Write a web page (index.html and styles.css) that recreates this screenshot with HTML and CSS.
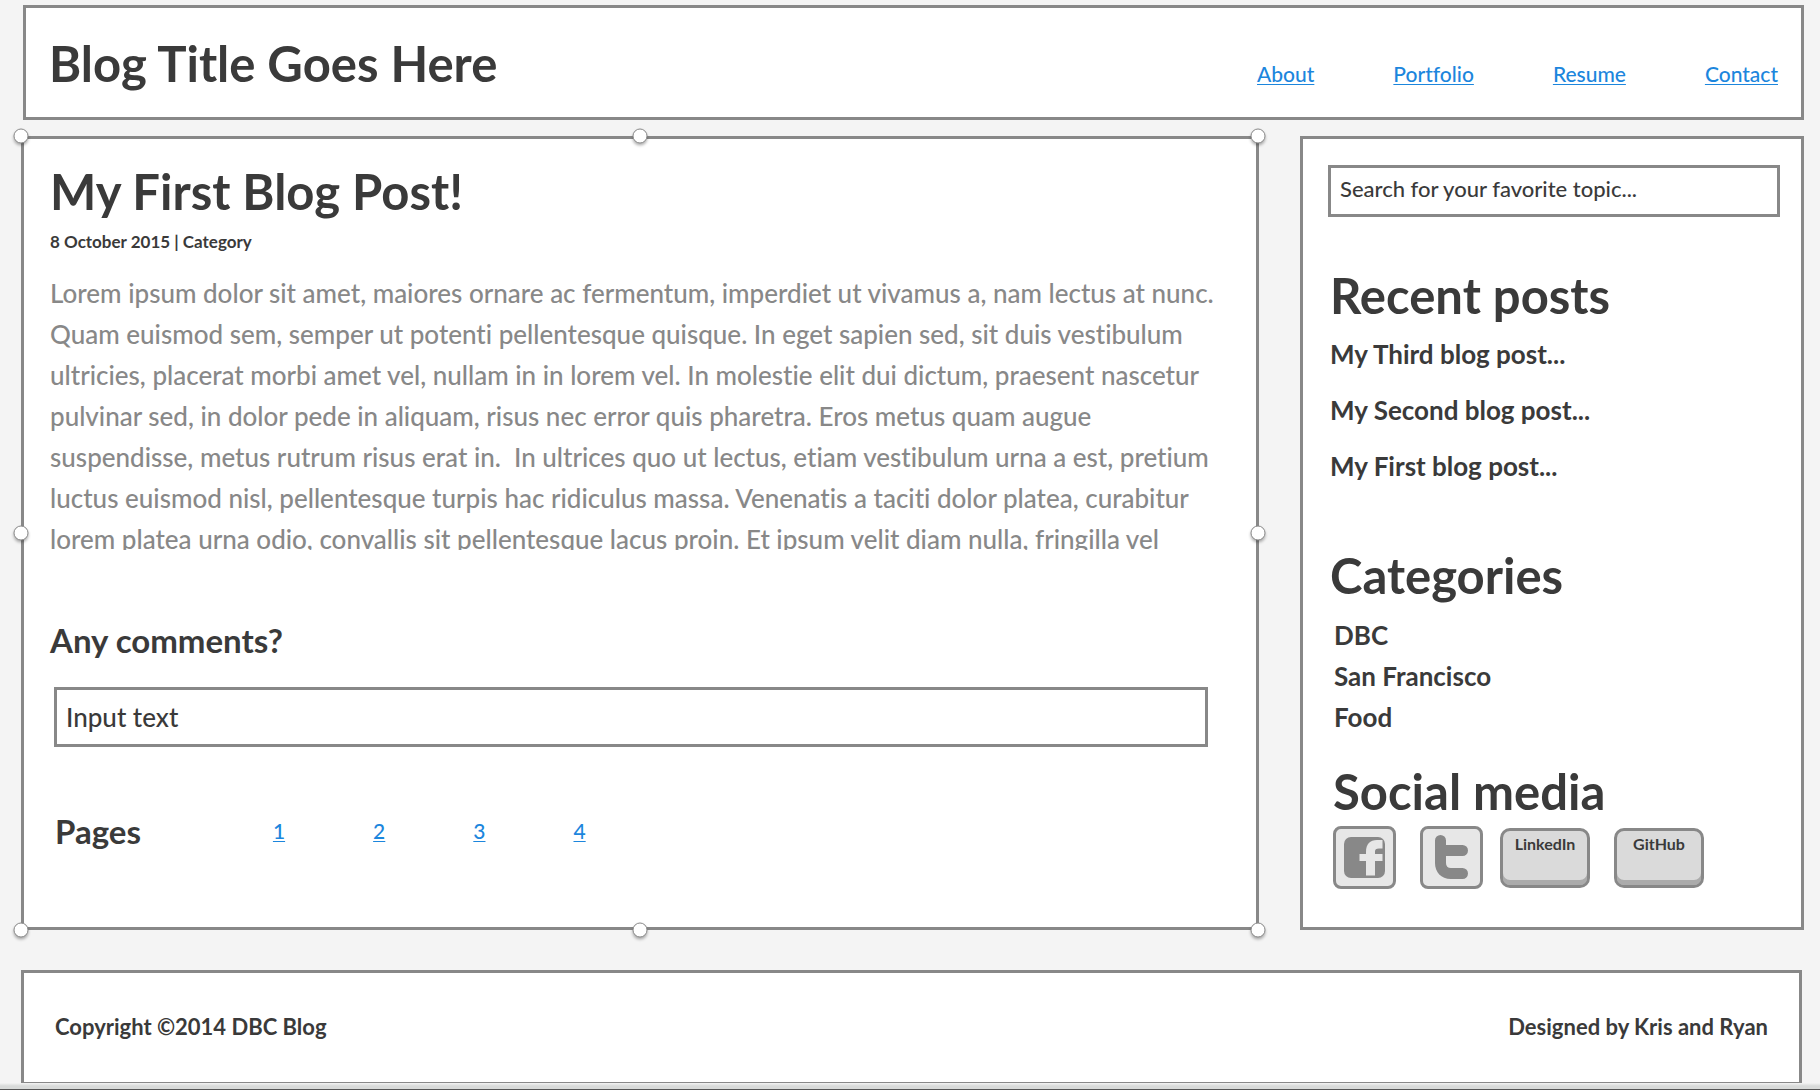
FILE: index.html
```html
<!DOCTYPE html>
<html lang="en">
<head>
  <meta charset="utf-8">
  <meta name="viewport" content="width=device-width, initial-scale=1">
  <title>Blog Title Goes Here</title>
  <link rel="stylesheet" href="styles.css">
</head>
<body>
  <header class="panel site-header">
    <h1 class="title">Blog Title Goes Here</h1>
    <nav class="site-nav" aria-label="Main">
      <a href="#about">About</a>
      <a href="#portfolio">Portfolio</a>
      <a href="#resume">Resume</a>
      <a href="#contact">Contact</a>
    </nav>
  </header>

  <div class="columns">
    <main class="panel post">
      <h2 class="title">My First Blog Post!</h2>
      <p class="meta">8 October 2015 | Category</p>
      <p class="body-text">Lorem ipsum dolor sit amet, maiores ornare ac fermentum, imperdiet ut vivamus a, nam lectus at nunc.<br>
        Quam euismod sem, semper ut potenti pellentesque quisque. In eget sapien sed, sit duis vestibulum<br>
        ultricies, placerat morbi amet vel, nullam in in lorem vel. In molestie elit dui dictum, praesent nascetur<br>
        pulvinar sed, in dolor pede in aliquam, risus nec error quis pharetra. Eros metus quam augue<br>
        suspendisse, metus rutrum risus erat in.&nbsp; In ultrices quo ut lectus, etiam vestibulum urna a est, pretium<br>
        luctus euismod nisl, pellentesque turpis hac ridiculus massa. Venenatis a taciti dolor platea, curabitur<br>
        lorem platea urna odio, convallis sit pellentesque lacus proin. Et ipsum velit diam nulla, fringilla vel</p>

      <label class="subhead" for="comment">Any comments?</label>
      <input class="field comment" id="comment" type="text" value="Input text">

      <nav class="pages" aria-labelledby="pages-label">
        <h3 class="subhead" id="pages-label">Pages</h3>
        <div class="page-links">
          <a href="#page-1">1</a>
          <a href="#page-2">2</a>
          <a href="#page-3">3</a>
          <a href="#page-4">4</a>
        </div>
      </nav>

      <span class="handle top left"></span>
      <span class="handle top center"></span>
      <span class="handle top right"></span>
      <span class="handle middle left"></span>
      <span class="handle middle right"></span>
      <span class="handle bottom left"></span>
      <span class="handle bottom center"></span>
      <span class="handle bottom right"></span>
    </main>

    <aside class="panel sidebar">
      <input class="field search" type="text" aria-label="Search" value="Search for your favorite topic...">

      <section class="recent">
        <h2 class="title">Recent posts</h2>
        <ul class="recent-list">
          <li>My Third blog post...</li>
          <li>My Second blog post...</li>
          <li>My First blog post...</li>
        </ul>
      </section>

      <section class="categories">
        <h2 class="title">Categories</h2>
        <ul class="category-list">
          <li>DBC</li>
          <li>San Francisco</li>
          <li>Food</li>
        </ul>
      </section>

      <section class="social">
        <h2 class="title">Social media</h2>
        <div class="social-row">
          <div class="icon-pair">
            <button class="icon-button" type="button" aria-label="Facebook">
              <svg viewBox="0 0 57 57" aria-hidden="true">
                <rect x="8" y="8" width="41" height="41" rx="7" fill="#888"/>
                <path d="M30 46.500V32h-6.500v-7H30v-2c0-8 4-12 11-12h5.500v8.500H43c-3 0-4 1-4 3V25h7.500v7H39v14.500z" fill="#e7e7e7"/>
              </svg>
            </button>
            <button class="icon-button" type="button" aria-label="Twitter">
              <svg viewBox="0 0 57 57" aria-hidden="true">
                <path d="M17.500 6a5.500 5.500 0 0 1 5.500 5.500V16h16.500a5.500 5.500 0 0 1 0 11H23v7q0 5 5 5h11.500a5.500 5.500 0 0 1 0 11H28C18 50 12 43 12 34V11.500a5.500 5.500 0 0 1 5.500-5.500z" fill="#888"/>
              </svg>
            </button>
          </div>
          <div class="key-pair">
            <button class="key-button" type="button">LinkedIn</button>
            <button class="key-button" type="button">GitHub</button>
          </div>
        </div>
      </section>
    </aside>
  </div>

  <footer class="panel site-footer">
    <p>Copyright ©2014 DBC Blog</p>
    <p>Designed by Kris and Ryan</p>
  </footer>
  <div class="window-edge"></div>
</body>
</html>
```
FILE: styles.css
```css
:root {
  --line: #888;
  --ink: #3a3a3a;
  --link: #1c86dd;
  --page: #f4f4f4;
}

* {
  box-sizing: border-box;
}

body {
  margin: 0;
  padding-top: 5px;
  background: var(--page);
  color: var(--ink);
  font-family: Lato, "Open Sans", sans-serif;
  font-weight: 500;
  font-variant-ligatures: none;
}

h1, h2, h3, p, ul {
  margin: 0;
  padding: 0;
}

ul {
  list-style: none;
}

a {
  color: var(--link);
  text-decoration: underline;
  text-decoration-thickness: 1px;
  text-underline-offset: 2px;
}

.panel {
  background: #fff;
  border: 3px solid var(--line);
}

.title {
  font-size: 49px;
  line-height: 58px;
  font-weight: 700;
}

/* Header */

.site-header {
  display: flex;
  justify-content: space-between;
  align-items: baseline;
  margin: 0 16px 16px 23px;
  padding: 26px 23px 25px;
}

.site-nav {
  display: flex;
  gap: 79px;
  font-size: 21px;
  line-height: 26px;
}

/* Two columns */

.columns {
  display: grid;
  grid-template-columns: 1238fr 504fr;
  gap: 41px;
  margin: 0 16px 40px 21px;
}

.post {
  position: relative;
  min-width: 0;
  padding: 23px 32px 75px 26px;
}

.meta {
  margin-top: 10px;
  font-size: 17px;
  line-height: 24px;
  font-weight: 700;
}

.body-text {
  height: 277px;
  margin-top: 19px;
  overflow: hidden;
  color: var(--line);
  font-size: 26px;
  line-height: 41px;
}

.subhead {
  display: block;
  font-size: 33px;
  line-height: 40px;
  font-weight: 700;
}

.post > .subhead {
  margin-top: 70px;
}

.field {
  display: block;
  border: 3px solid var(--line);
  border-radius: 0;
  background: #fff;
  color: var(--ink);
  font-family: inherit;
  font-weight: 500;
}

.comment {
  width: calc(100% - 20px);
  height: 60px;
  margin: 27px 16px 64px 4px;
  padding: 0 9px;
  font-size: 26px;
}

.pages {
  display: flex;
  align-items: center;
  padding-left: 5px;
}

.page-links {
  display: flex;
  gap: 88px;
  margin-left: 132px;
  font-size: 21px;
  line-height: 26px;
}

/* Selection handles on the post frame */

.handle {
  position: absolute;
  width: 15px;
  height: 15px;
  border: 1px solid #8a8a8a;
  border-radius: 50%;
  background: #fff;
  box-shadow: 0 2px 3px rgba(0, 0, 0, 0.3);
  transform: translate(-50%, -50%);
}

.top { top: -3px; }
.middle { top: 50%; }
.bottom { top: calc(100% + 3px); }
.left { left: -3px; }
.center { left: 50%; }
.right { left: calc(100% + 2px); }

/* Sidebar */

.sidebar {
  min-width: 0;
  padding: 26px 21px 38px 25px;
}

.search {
  width: 100%;
  height: 52px;
  padding: 0 9px 6px;
  font-size: 22px;
}

.recent {
  margin-top: 49px;
  padding-left: 2px;
}

.recent-list {
  display: grid;
  gap: 16px;
  margin-top: 10px;
  font-size: 26px;
  line-height: 40px;
  font-weight: 700;
}

.categories {
  margin-top: 60px;
  padding-left: 2px;
}

.category-list {
  margin-top: 11px;
  padding-left: 4px;
  font-size: 26px;
  line-height: 41px;
  font-weight: 700;
}

.social {
  margin-top: 24px;
  padding-left: 5px;
}

.social-row {
  display: flex;
  flex-wrap: wrap;
  align-items: center;
  gap: 17px;
  margin-top: 6px;
}

.icon-pair,
.key-pair {
  display: flex;
  gap: 24px;
}

.icon-button {
  width: 63px;
  height: 63px;
  padding: 0;
  border: 3px solid var(--line);
  border-radius: 8px;
  background: #e7e7e7;
}

.icon-button svg {
  display: block;
  width: 100%;
  height: 100%;
}

.key-button {
  display: flex;
  justify-content: center;
  align-items: flex-start;
  width: 90px;
  height: 60px;
  padding: 3px 0 0;
  border: 3px solid var(--line);
  border-radius: 10px;
  background: #dadada;
  box-shadow: inset 0 -5px 0 #ababab;
  color: var(--ink);
  font-family: inherit;
  font-size: 16px;
  line-height: 20px;
  font-weight: 700;
}

/* Footer */

.site-footer {
  display: flex;
  justify-content: space-between;
  margin: 0 18px 0 21px;
  padding: 41px 31px 42px;
  border-bottom-width: 1px;
  font-size: 22px;
  line-height: 26px;
  font-weight: 700;
}

.window-edge {
  height: 7px;
  border-bottom: 1px solid #555;
  background: linear-gradient(#f4f4f4, #d8dad9 50%);
}
```
